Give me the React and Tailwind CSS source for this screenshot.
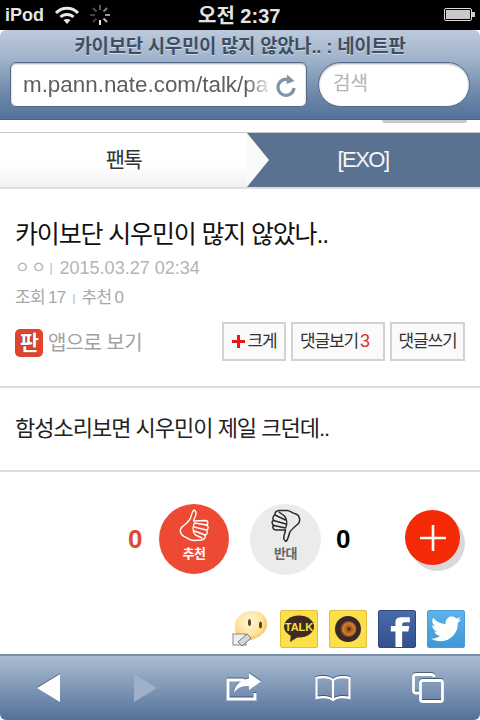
const FONT = "font-['Liberation_Sans','Noto_Sans_CJK_KR',sans-serif]";

function Wifi() {
  return (
    <svg width="26" height="20" viewBox="0 0 26 20" fill="none" stroke="#e8e8e8" strokeWidth="3">
      <path d="M2 8 C8 1.500 18 1.500 24 8" />
      <path d="M6.500 12 C10 8.500 16 8.500 19.500 12" />
      <path d="M13 19 L9.500 15 C11.500 13.500 14.500 13.500 16.500 15 Z" fill="#e8e8e8" stroke="none" />
    </svg>
  );
}

function Spinner() {
  const spokes = [0, 45, 90, 135, 180, 225, 270, 315];
  const ops = [0.35, 0.5, 0.6, 0.75, 0.9, 0.25, 0.25, 0.3];
  return (
    <svg width="22" height="22" viewBox="-11 -11 22 22">
      {spokes.map((a, i) => (
        <line key={a} x1="0" y1="-5" x2="0" y2="-10" stroke="#fff" strokeOpacity={ops[i]} strokeWidth="2" transform={`rotate(${a})`} />
      ))}
    </svg>
  );
}

function Battery() {
  return (
    <svg width="32" height="16" viewBox="0 0 32 16">
      <rect x="0.500" y="1.500" width="27" height="12" rx="1.500" fill="none" stroke="#ddd" />
      <rect x="2" y="3" width="24" height="9" fill="#c8c8c8" />
      <rect x="28" y="5" width="3" height="5" fill="#ccc" />
    </svg>
  );
}

function Reload() {
  return (
    <svg width="24" height="24" viewBox="0 0 24 24" fill="none">
      <path d="M17.500 8.500 A8 8 0 1 0 20 15" stroke="#7f93aa" strokeWidth="3.200" />
      <path d="M13 1.500 L20.500 8 L12.500 11 Z" fill="#7f93aa" />
    </svg>
  );
}

function ThumbUp() {
  return (
    <svg width="30" height="33" viewBox="0 0 30 33" fill="none" stroke="#fff" strokeWidth="1.400" strokeLinejoin="round" strokeLinecap="round">
      <path d="M15 1 C17.500 2 17.500 5 16 8 L14.500 12 L26 11.500 C29.500 11.500 29.500 15 27.500 16 C30 17 29.500 20.500 27.500 21 C29 23 28 26 26 26 C27 28.500 25 31 22.500 31 L15 31.500 C10.500 31.500 8.500 28.500 5 27.500 C1 25.500 0.500 21 2.500 18.500 C6 15 10 13 11.500 9 C12.500 6 13 2.500 15 1 Z" />
      <path d="M15.500 14 L27.500 16 M15 18 L27.500 21 M15.500 22 L26 26 M16.500 26 L23 29 M15.500 14 C13.500 18 13.500 23 16.500 26" />
    </svg>
  );
}

function ThumbDown() {
  return (
    <svg width="30" height="33" viewBox="0 0 30 33" fill="none" stroke="#2a2a2a" strokeWidth="1.500" strokeLinejoin="round" strokeLinecap="round">
      <path d="M15 32.500 C12.500 31.500 12.500 28 13.500 25 L14.500 21 L5 21 C1.500 20.500 1 17.500 3 16.500 C0.500 15.500 0.500 12 2.500 11.500 C1.500 9.500 2 6.500 4 6 C3.500 3.500 5.500 1.500 8 1.500 L16 1.500 C19 1.500 21 4 25 5 C29 6.500 29.500 11.500 27.500 14.500 C24 18 20 20 18.500 24 C17.500 27 17 31 15 32.500 Z" />
      <path d="M14.500 19 L3 16.500 M15 15 L2.500 11.500 M14.500 11 L4 6 M13.500 7 L8 3 M13.500 7 C16 10 16.500 15 14.500 19" />
    </svg>
  );
}

function Smiley() {
  return (
    <svg width="36" height="38" viewBox="0 0 36 38">
      <defs>
        <radialGradient id="sm" cx="0.450" cy="0.350" r="0.700">
          <stop offset="0" stopColor="#fff8dc" />
          <stop offset="0.600" stopColor="#fde29a" />
          <stop offset="1" stopColor="#eca82a" />
        </radialGradient>
      </defs>
      <path d="M20 1 C30 1 35 7 35 14 C35 23 26 29 15 31 L8 33 C5 28 3 22 3 16 C3 7 11 1 20 1 Z" fill="url(#sm)" />
      <ellipse cx="17.500" cy="12.500" rx="1.500" ry="3.500" fill="#5a4420" />
      <ellipse cx="28.500" cy="15" rx="1.500" ry="3.500" fill="#5a4420" />
      <rect x="1" y="24" width="13" height="11" fill="#f0f0f0" stroke="#8a8a8a" />
      <path d="M10 36 L6 32 L15 24 L19 28 Z" fill="#d8d8d8" stroke="#777" />
    </svg>
  );
}

function KakaoTalk() {
  return (
    <div className="w-[38px] h-[38px] rounded-[2px] bg-[#fbe04a] border border-[#e2bd3f] flex items-center justify-center">
      <svg width="32" height="28" viewBox="0 0 32 28">
        <ellipse cx="16" cy="11.500" rx="15" ry="11" fill="#3d2b1f" />
        <path d="M8 19 L7 27 L15 22 Z" fill="#3d2b1f" />
        <text x="16" y="15.500" textAnchor="middle" fontSize="11" fontWeight="700" fill="#fbe04a" fontFamily="Liberation Sans">TALK</text>
      </svg>
    </div>
  );
}

function KakaoStory() {
  return (
    <div className="w-[38px] h-[38px] rounded-[2px] bg-[#fbe04a] border border-[#e2bd3f] flex items-center justify-center">
      <svg width="28" height="28" viewBox="0 0 28 28">
        <defs>
          <radialGradient id="lens" cx="0.550" cy="0.500" r="0.500">
            <stop offset="0" stopColor="#3a1c0c" />
            <stop offset="0.300" stopColor="#a85a20" />
            <stop offset="0.700" stopColor="#d08030" />
            <stop offset="1" stopColor="#4a2a16" />
          </radialGradient>
        </defs>
        <circle cx="14" cy="14" r="13" fill="#38282a" />
        <circle cx="14" cy="14" r="8.500" fill="url(#lens)" />
      </svg>
    </div>
  );
}

function Facebook() {
  return (
    <div className="w-[38px] h-[38px] rounded-[2px] bg-[linear-gradient(#4a6aa8,#345090)] border border-[#2f4880] overflow-hidden">
      <svg width="36" height="36" viewBox="0 0 35 35">
        <path d="M16 35 L16 20 L11.500 20 L11.500 14.500 L16 14.500 L16 11 C16 6.500 19 6 22.500 6 L30 6 L30 11 L25 11 C23 11 22.500 12 22.500 13 L22.500 14.500 L29.500 14.500 L28.500 20 L22.500 20 L22.500 35 Z" fill="#fff" />
      </svg>
    </div>
  );
}

function Twitter() {
  return (
    <div className="w-[38px] h-[38px] rounded-[2px] bg-[linear-gradient(#5db2ea,#3f97d8)] border border-[#4a9bd6] flex items-center justify-center">
      <svg width="30" height="26" viewBox="0 0 24 20">
        <path d="M24 2.400 C23 2.800 22.300 3 21.200 3.100 C22.300 2.500 23.100 1.500 23.500 0.300 C22.500 0.900 21.400 1.300 20.200 1.600 C19.300 0.600 18 0 16.600 0 C13.900 0 11.700 2.200 11.700 4.900 C11.700 5.300 11.700 5.700 11.800 6 C7.700 5.800 4.100 3.900 1.700 0.900 C1.300 1.600 1 2.500 1 3.400 C1 5.100 1.900 6.600 3.200 7.500 C2.400 7.500 1.600 7.300 1 6.900 L1 7 C1 9.400 2.700 11.400 4.900 11.800 C4.100 12 3.300 12 2.700 11.900 C3.300 13.900 5.100 15.300 7.300 15.300 C5.100 17 2.500 17.800 0 17.500 C2.200 18.900 4.800 19.700 7.500 19.700 C16.600 19.700 21.500 12.200 21.500 5.700 L21.500 5 C22.500 4.300 23.300 3.400 24 2.400 Z" fill="#fff" />
      </svg>
    </div>
  );
}

function Back({ fill }) {
  return (
    <svg width="26" height="30" viewBox="0 0 26 30">
      <path d="M24 1 L24 29 L1 15 Z" fill={fill} />
    </svg>
  );
}

function Forward({ fill }) {
  return (
    <svg width="26" height="30" viewBox="0 0 26 30">
      <path d="M2 1 L2 29 L25 15 Z" fill={fill} />
    </svg>
  );
}

function Share() {
  return (
    <svg width="36" height="30" viewBox="0 0 36 30" fill="none">
      <path d="M18 8 L2 8 L2 27 L29 27 L29 21" stroke="#fff" strokeWidth="3" />
      <path d="M23 1 L35 9.500 L23 18 L23 14 C16 13.500 11 15.500 8 21 C8.500 13 15 7 23 6.500 Z" fill="#fff" />
    </svg>
  );
}

function Book() {
  return (
    <svg width="36" height="26" viewBox="0 0 36 26" fill="none" stroke="#fff" strokeWidth="2.200">
      <path d="M18 4 C14 0.500 6 0.500 1.500 2 L1.500 22 C6 20.500 14 20.500 18 24 C22 20.500 30 20.500 34.500 22 L34.500 2 C30 0.500 22 0.500 18 4 Z" />
      <path d="M18 4 L18 24" />
    </svg>
  );
}

function Tabs() {
  return (
    <svg width="32" height="30" viewBox="0 0 32 30" fill="none" stroke="#fff" strokeWidth="2.800">
      <path d="M7 20 L4 20 C2.500 20 1.500 19 1.500 18 L1.500 3.500 C1.500 2 2.500 1.500 4 1.500 L19 1.500 C21 1.500 22 2 22 4" />
      <rect x="8.500" y="7.500" width="22" height="21" rx="2" />
    </svg>
  );
}

function Btn({ className, children }) {
  return (
    <div className={`h-[39px] border-2 border-[#d2d2d2] bg-[#fafafa] flex items-center justify-center text-[17px] tracking-[-1.200px] text-[#333] ${className}`}>
      {children}
    </div>
  );
}

export default function App() {
  return (
    <div className={`${FONT} w-[480px] h-[720px] flex flex-col overflow-hidden bg-white`}>
      {/* status bar */}
      <div className="h-[30px] shrink-0 bg-black flex items-center text-[#e4e4e4] pl-[5px] pr-[4px]">
        <span className="text-[18px] font-bold w-[50px] leading-none">iPod</span>
        <span className="-ml-[1px]"><Wifi /></span>
        <span className="ml-[9px]"><Spinner /></span>
        <span className="ml-[87px] w-[86px] pt-[1px] font-bold leading-none whitespace-nowrap text-[20px]">오전 2:37</span>
        <span className="ml-auto"><Battery /></span>
      </div>

      {/* browser chrome */}
      <div className="h-[90px] shrink-0 rounded-t-[6px] bg-[linear-gradient(#bccadb,#a3b5cc_30%,#6f8aac_70%,#53719a)] border-b border-[#47617f] flex flex-col">
        <div className="h-[32px] flex items-center justify-center pt-[2px] text-[18.900px] font-bold tracking-[-0.300px] text-[#3f4f63] [text-shadow:0_1px_0_#d2dce8]">
          카이보단 시우민이 많지 않았나.. : 네이트판
        </div>
        <div className="flex pl-[10px] pr-[10px] gap-[11px]">
          <div className="w-[297px] h-[45px] bg-white rounded-[6px] border border-[#50688a] shadow-[inset_0_1px_2px_rgba(0,0,0,0.35)] flex items-center pl-[12px] pr-[8px] overflow-hidden">
            <span className="text-[22.400px] text-[#5e5e5e] whitespace-nowrap flex-1 [mask-image:linear-gradient(to_right,#000_90%,transparent)]">m.pann.nate.com/talk/pa</span>
            <span className="ml-[2px] shrink-0"><Reload /></span>
          </div>
          <div className="w-[152px] h-[45px] bg-white rounded-full border border-[#50688a] shadow-[inset_0_1px_2px_rgba(0,0,0,0.35)] flex items-center pl-[14px] text-[19px] text-[#b2b2b2]">
            검색
          </div>
        </div>
      </div>

      {/* scrolled-off button sliver */}
      <div className="h-[13px] shrink-0 bg-white flex justify-end pr-[13px] border-b border-[#c8c8c8]">
        <div className="w-[85px] h-[3px] bg-[#c9c9c9] rounded-b-[3px]" />
      </div>

      {/* breadcrumb */}
      <div className="h-[56px] shrink-0 flex relative bg-[#5a7290] border-b-2 border-[#dedede]">
        <div className="w-[247px] bg-[linear-gradient(#ffffff,#ffffff_60%,#f1f1f1)] flex items-center justify-center text-[21px] tracking-[-1.500px] text-[#333]">
          팬톡
        </div>
        <svg width="22" height="54" viewBox="0 0 22 54" className="shrink-0">
          <path d="M0 0 L22 27 L0 54 Z" fill="#fafafa" />
        </svg>
        <div className="flex-1 flex items-center justify-center pr-[23px] pb-[1px] text-[22px] tracking-[-1.500px] text-[#f4f6f8]">
          [EXO]
        </div>
      </div>

      {/* title block */}
      <div className="h-[199px] shrink-0 border-b-2 border-[#dcdcdc] px-[15px] flex flex-col">
        <div className="mt-[27px] text-[25px] leading-[36px] tracking-[-1.150px] text-[#111]">카이보단 시우민이 많지 않았나..</div>
        <div className="mt-[4px] flex items-center h-[24px] text-[18px] text-[#b4b4b4]">
          <span className="text-[16px] tracking-[1.500px]">ㅇㅇ</span>
          <span className="ml-[2px] mr-[7px] text-[12px]">|</span>
          <span>2015.03.27 02:34</span>
        </div>
        <div className="mt-[6px] flex items-center h-[24px] text-[17px] tracking-[-0.700px] text-[#a8a8a8]">
          <span>조회</span>
          <span className="ml-[3px]">17</span>
          <span className="mx-[7px] text-[11px]">|</span>
          <span>추천</span>
          <span className="ml-[3px]">0</span>
        </div>
        <div className="mt-[12px] flex items-center">
          <div className="mt-[2px] w-[28px] h-[28px] rounded-[5px] bg-[#e2432f] flex items-center justify-center text-white text-[21px] font-bold leading-none tracking-[-1px] [text-shadow:0_0_1px_#7a1f14,0_0_1px_#7a1f14]">
            판
          </div>
          <span className="mt-[2px] ml-[5px] text-[20px] tracking-[-0.600px] text-[#a2a2a2]">앱으로 보기</span>
          <div className="ml-auto flex gap-[5px]">
            <Btn className="w-[64px]">
              <svg width="13" height="13" viewBox="0 0 13 13" className="mr-[3px] shrink-0">
                <path d="M5 0 H8 V5 H13 V8 H8 V13 H5 V8 H0 V5 H5 Z" fill="#e41b1b" />
              </svg>
              크게
            </Btn>
            <Btn className="w-[94px] pr-[6px]">
              댓글보기<span className="text-[#d0392b] text-[18px] ml-[2px] tracking-normal">3</span>
            </Btn>
            <Btn className="w-[75px]">댓글쓰기</Btn>
          </div>
        </div>
      </div>

      {/* body */}
      <div className="h-[84px] shrink-0 border-b-2 border-[#dcdcdc] px-[15px] pt-[25px] text-[22px] leading-[32px] tracking-[-1px] text-[#222]">
        함성소리보면 시우민이 제일 크던데..
      </div>

      {/* votes */}
      <div className="h-[137px] shrink-0 flex items-start pt-[32px]">
        <div className="ml-[128px] w-[16px] h-[70px] flex items-center text-[#e04a30] text-[26px] font-bold">0</div>
        <div className="ml-[15px] w-[70px] h-[70px] rounded-full bg-[#ec4a32] flex flex-col items-center text-white text-[13px] font-bold pt-[5px] leading-none">
          <ThumbUp />
          <span className="mt-[5px] tracking-[-0.500px]">추천</span>
        </div>
        <div className="ml-[21px] w-[71px] h-[71px] rounded-full bg-[#ebebeb] flex flex-col items-center text-[#666] text-[13px] font-bold pt-[5px] leading-none">
          <ThumbDown />
          <span className="mt-[5px] tracking-[-0.500px]">반대</span>
        </div>
        <div className="ml-[15px] w-[16px] h-[70px] flex items-center text-black text-[26px] font-bold">0</div>
        <div className="ml-[53px] mt-[6px] w-[55px] h-[55px] rounded-full bg-[#f32a05] shadow-[5px_6px_0_#d9d9d9] flex items-center justify-center">
          <svg width="28" height="28" viewBox="0 0 28 28" stroke="#fff" strokeWidth="2.600">
            <path d="M1 14 L27 14 M14 1 L14 27" />
          </svg>
        </div>
      </div>

      {/* share icons */}
      <div className="flex-1 min-h-0 flex justify-end items-start gap-[11px] pr-[15px] pt-[1px]">
        <span className="mr-[1px] flex"><Smiley /></span>
        <KakaoTalk />
        <KakaoStory />
        <Facebook />
        <Twitter />
      </div>

      {/* bottom toolbar */}
      <div className="h-[66px] shrink-0 rounded-b-[6px] bg-[linear-gradient(#abbcd2,#7f97b6_50%,#54719b)] border-t-2 border-[#7a8ea8] flex items-center relative">
        <span className="ml-[36px] flex drop-shadow-[0_-1px_0_rgba(30,50,80,0.6)]"><Back fill="#fff" /></span>
        <span className="ml-[70px] flex"><Forward fill="#9fb0c8" /></span>
        <span className="ml-[68px] flex -mt-[2px] drop-shadow-[0_-1px_0_rgba(30,50,80,0.6)]"><Share /></span>
        <span className="ml-[53px] flex mt-[1px] drop-shadow-[0_-1px_0_rgba(30,50,80,0.6)]"><Book /></span>
        <span className="ml-[61px] flex drop-shadow-[0_-1px_0_rgba(30,50,80,0.6)]"><Tabs /></span>
      </div>
    </div>
  );
}
